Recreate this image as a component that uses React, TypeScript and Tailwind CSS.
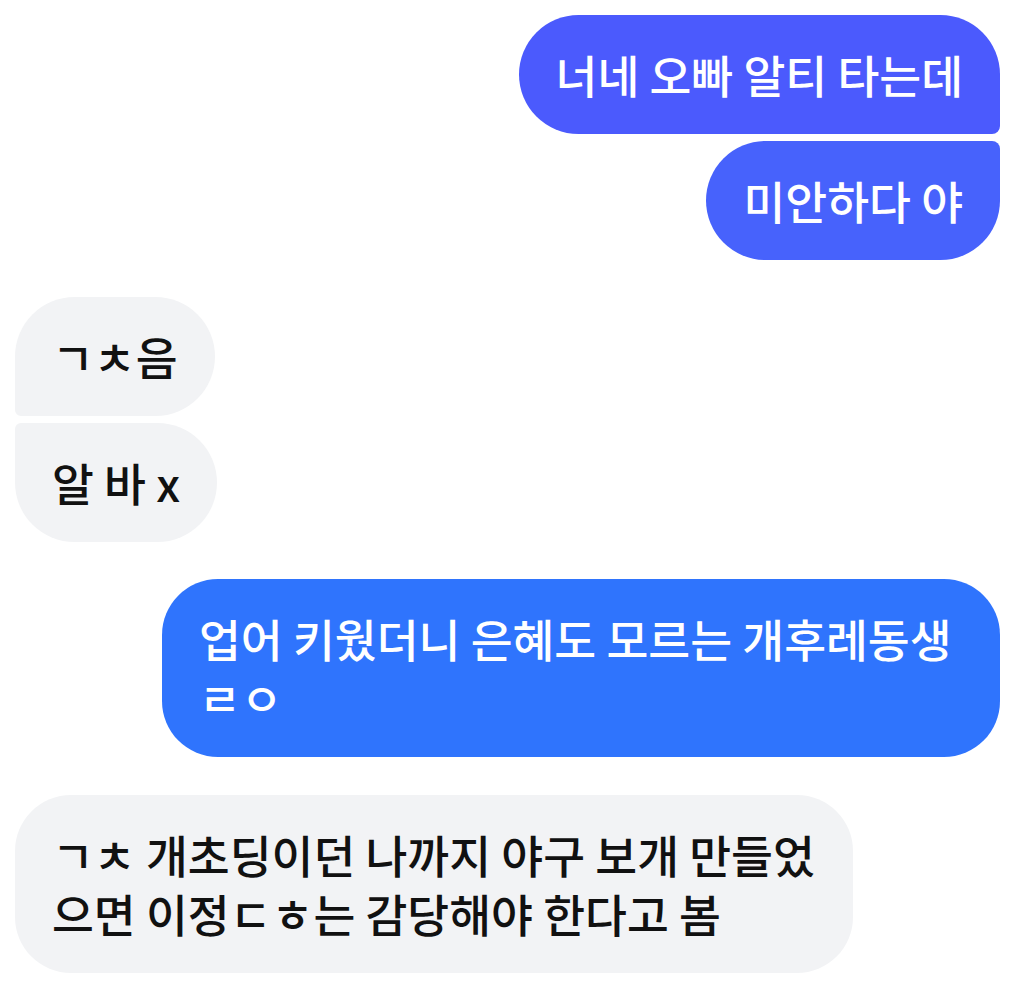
type Msg = {
  id: number;
  text: string;
  mine: boolean;
  corner: string;
  color: string;
  gapTop: string;
};

const messages: Msg[] = [
  { id: 1, text: "너네 오빠 알티 타는데", mine: true, corner: "rounded-[60px] rounded-br-[8px]", color: "bg-[#4b5afd]", gapTop: "mt-0" },
  { id: 2, text: "미안하다 야", mine: true, corner: "rounded-[60px] rounded-tr-[8px]", color: "bg-[#4762fc]", gapTop: "mt-[7px]" },
  { id: 3, text: "ㄱㅊ음", mine: false, corner: "rounded-[60px] rounded-bl-[6px]", color: "bg-[#f2f3f5]", gapTop: "mt-[37px]" },
  { id: 4, text: "알 바 x", mine: false, corner: "rounded-[60px] rounded-tl-[6px]", color: "bg-[#f2f3f5]", gapTop: "mt-[7px]" },
  { id: 5, text: "업어 키웠더니 은혜도 모르는 개후레동생 ㄹㅇ", mine: true, corner: "rounded-[56px]", color: "bg-[#2f74fd]", gapTop: "mt-[37px]" },
  { id: 6, text: "ㄱㅊ 개초딩이던 나까지 야구 보개 만들었으면 이정ㄷㅎ는 감당해야 한다고 봄", mine: false, corner: "rounded-[56px]", color: "bg-[#f2f3f5]", gapTop: "mt-[38px]" },
];

export default function App() {
  return (
    <div
      className="min-h-[985px] w-[1024px] bg-white pl-[15px] pr-[24px] pt-[15px]"
      style={{ fontFamily: '"Noto Sans CJK KR", "Noto Sans", sans-serif' }}
    >
      <div className="flex flex-col">
        {messages.map((m) => (
          <div key={m.id} className={`flex ${m.mine ? "justify-end" : "justify-start"} ${m.gapTop}`}>
            <div
              className={`max-w-[838px] px-[37px] py-[30px] text-[45.5px] leading-[59px] font-medium break-all ${m.corner} ${m.color} ${
                m.mine ? "text-white" : "text-[#111111]"
              }`}
            >
              {m.text}
            </div>
          </div>
        ))}
      </div>
    </div>
  );
}
